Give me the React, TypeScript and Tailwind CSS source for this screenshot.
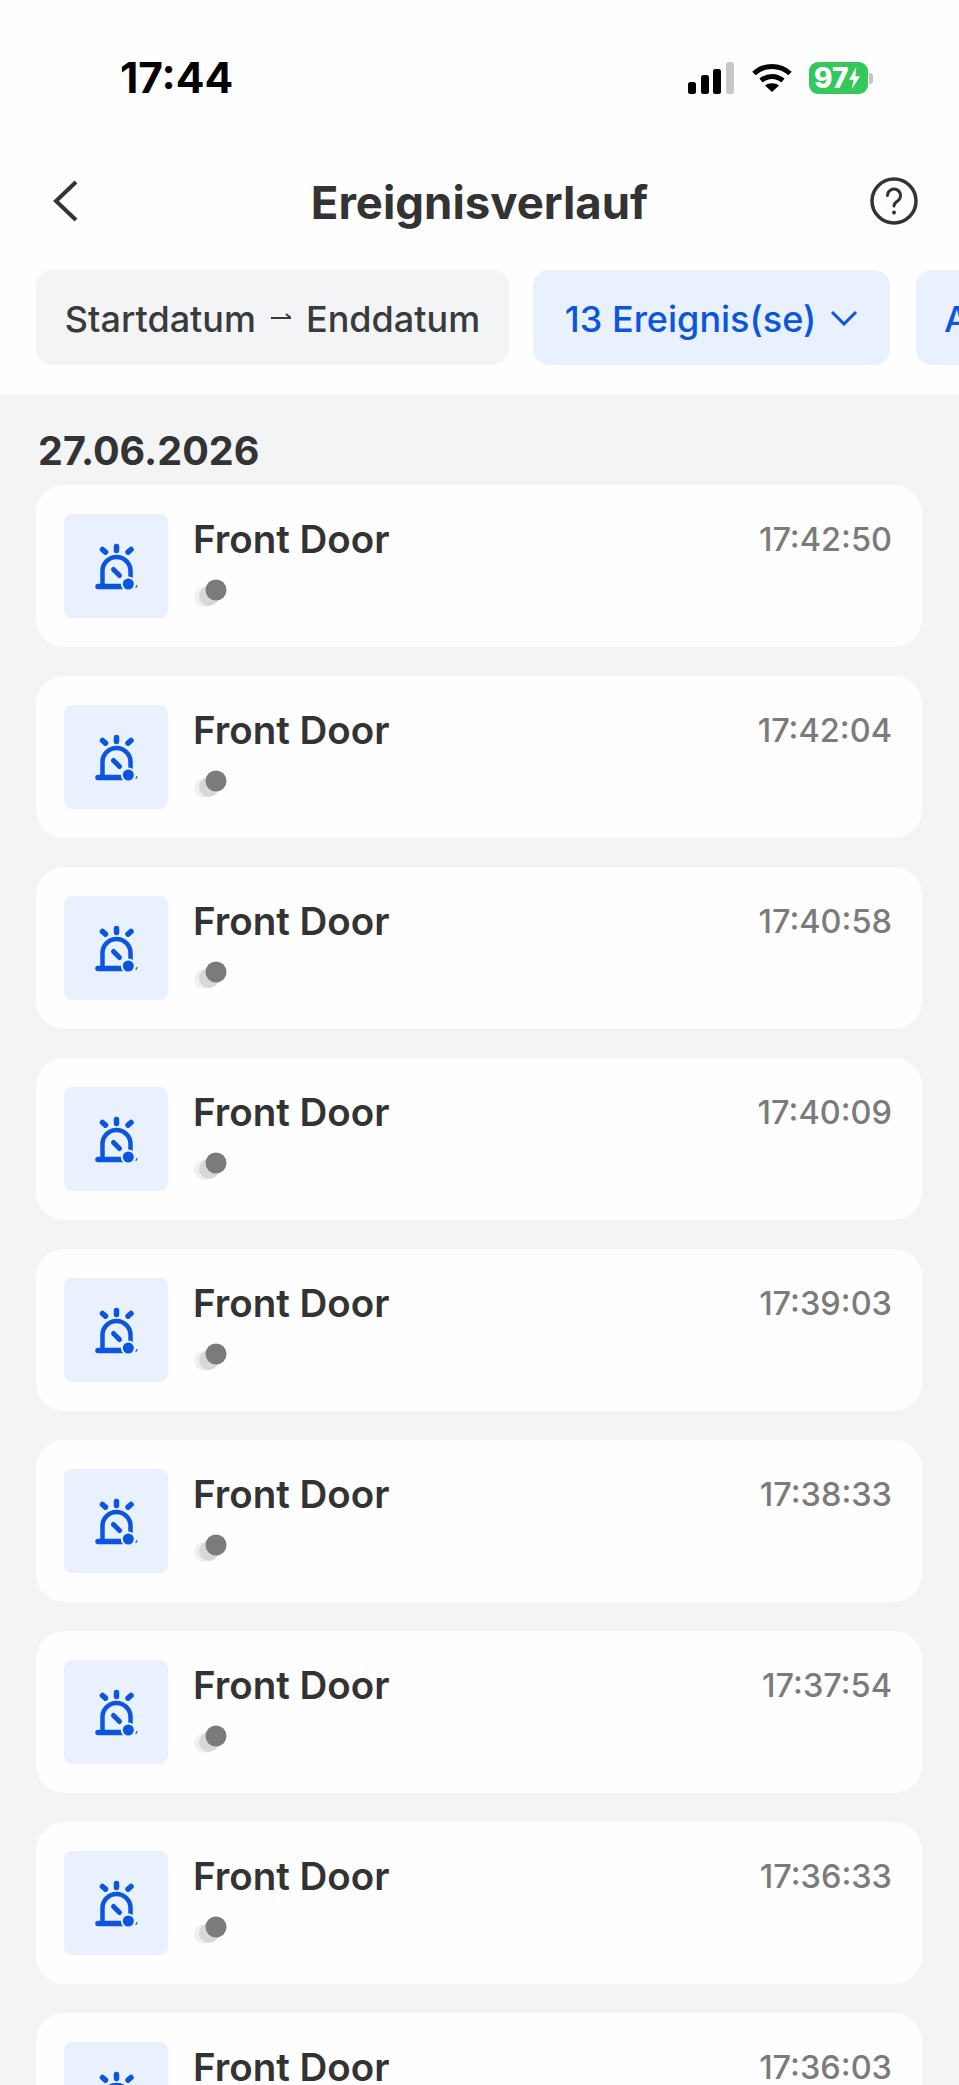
import React from 'react';

const times = ['17:42:50', '17:42:04', '17:40:58', '17:40:09', '17:39:03', '17:38:33', '17:37:54', '17:36:33', '17:36:03'];

const AlarmIcon = () => (
  <svg viewBox="0 0 104 104" className="w-[104px] h-[104px]" fill="none" stroke="#0b55e0" strokeLinecap="round">
    <path d="M52.500 32.500v4M38.500 35.500l3 2.600M67 35.500l-3 2.600" strokeWidth="5.500" />
    <path d="M38.500 72V57a14 14 0 0 1 28 0v9" strokeWidth="4.500" />
    <path d="M34 72.500h27" strokeWidth="5.500" />
    <path d="M49.500 55.500l6 6" strokeWidth="5" />
    <circle cx="64.300" cy="70" r="7.500" fill="#e8f1fd" stroke="none" />
    <circle cx="64.300" cy="70" r="5.500" fill="#0b55e0" stroke="none" />
    <path d="M73 71.500l-1 2" strokeWidth="1.200" />
  </svg>
);

const StatusDot = () => (
  <svg viewBox="0 0 36 34" className="w-[36px] h-[34px]">
    <circle cx="11" cy="20" r="10" fill="#f0f0f0" />
    <circle cx="16" cy="19" r="10" fill="#d8d8d8" />
    <circle cx="23" cy="13" r="10.500" fill="#7b7b7b" />
  </svg>
);

const EventCard = ({ time }: { time: string }) => (
  <div className="h-[162px] rounded-[28px] bg-[#fefefe] pl-[28px] pr-[30px] pt-[29px] flex items-start">
    <div className="w-[104px] h-[104px] rounded-[8px] bg-[#e8f1fd] shrink-0">
      <AlarmIcon />
    </div>
    <div className="ml-[25px] flex-1">
      <div className="flex items-start justify-between pt-[1px]">
        <span className="text-[38.500px] leading-[48px] font-semibold text-[#333333]">Front Door</span>
        <span className="text-[32.500px] leading-[50px] font-medium text-[#7b7b7b]">{time}</span>
      </div>
      <div className="mt-[12px]">
        <StatusDot />
      </div>
    </div>
  </div>
);

export default function App() {
  return (
    <div className="w-[959px] h-[2085px] overflow-hidden bg-[#f3f4f6] font-['Inter',sans-serif]">
      <div className="bg-[#fefefe] pt-[56px] pb-[29px]">
        <div className="h-[44px] flex items-center justify-between pl-[120px] pr-[86px]">
          <span className="text-[42.500px] leading-[44px] font-bold text-black">17:44</span>
          <div className="flex items-center">
            <svg viewBox="0 0 46 32" className="w-[46px] h-[32px]" fill="#000">
              <rect x="0" y="20" width="8" height="12" rx="2.500" />
              <rect x="13" y="13" width="8" height="19" rx="2.500" />
              <rect x="25" y="7" width="8" height="25" rx="2.500" />
              <rect x="38" y="0" width="8" height="32" rx="2.500" fill="#c8c8c8" />
            </svg>
            <svg viewBox="0 0 40 30" className="w-[40px] h-[30px] ml-[18px]" fill="none" stroke="#000" strokeWidth="5">
              <path d="M2 10.500C12 1 28 1 38 10.500" />
              <path d="M9 17.500c6.500-5.500 15.500-5.500 22 0" />
              <path d="M20 29l-7-6.500c4-3 10-3 14 0z" fill="#000" stroke="none" />
            </svg>
            <div className="ml-[17px] w-[59px] h-[32px] rounded-[9px] bg-[#34c759] flex items-center pl-[5px] text-white">
              <span className="text-[28px] leading-[32px] font-extrabold">97</span>
              <svg viewBox="0 0 14 24" className="w-[13px] h-[24px]" fill="#fff">
                <path d="M9 0L1 14h5l-2 10 9-14H8z" />
              </svg>
            </div>
            <div className="ml-[1px] w-[4px] h-[11px] rounded-r-[3px] bg-[#c4c4c4]" />
          </div>
        </div>
        <div className="mt-[61px] h-[80px] flex items-center justify-between pl-[50px] pr-[41px] relative">
          <svg viewBox="0 0 28 44" className="w-[28px] h-[44px]" fill="none" stroke="#333333" strokeWidth="4">
            <path d="M26 3L6 22l20 19" />
          </svg>
          <h1 className="absolute left-0 right-0 top-[2px] text-center text-[45.500px] leading-[80px] font-bold text-[#333333]">Ereignisverlauf</h1>
          <svg viewBox="0 0 48 48" className="w-[48px] h-[48px]" fill="none" stroke="#333333" strokeWidth="3.500" strokeLinecap="round">
            <circle cx="24" cy="24" r="22" />
            <path d="M17.500 18.500a6.500 6.500 0 1 1 10 5.500c-2.200 1.500-3.500 2.800-3.500 5" strokeWidth="3" />
            <circle cx="24" cy="35.500" r="2" fill="#333333" stroke="none" />
          </svg>
        </div>
        <div className="mt-[29px] flex pl-[36px] gap-[24px] overflow-hidden">
          <div className="shrink-0 w-[473px] h-[95px] pt-[2px] rounded-[16px] bg-[#f3f4f6] flex items-center justify-center text-[36px] font-medium text-[#3a3a3a]">
            <span>Startdatum</span>
            <svg viewBox="0 0 20 12" className="w-[20px] h-[12px] mx-[15px] -mt-[4px]" fill="none" stroke="#3a3a3a" strokeWidth="2">
              <path d="M0 7h20M15 3l5 4" />
            </svg>
            <span>Enddatum</span>
          </div>
          <div className="shrink-0 w-[357px] h-[95px] pt-[2px] rounded-[16px] bg-[#e8f1fd] flex items-center justify-center text-[36px] font-medium text-[#0b55e0]">
            <span>13 Ereignis(se)</span>
            <svg viewBox="0 0 28 16" className="w-[28px] h-[16px] ml-[14px] -mt-[2px]" fill="none" stroke="#0b55e0" strokeWidth="3">
              <path d="M2 2l12 12L26 2" />
            </svg>
          </div>
          <div className="shrink-0 w-[200px] h-[95px] pt-[2px] ml-[2px] rounded-[16px] bg-[#e8f1fd] pl-[28px] flex items-center text-[36px] font-medium text-[#0b55e0]">
            <span>Alle</span>
          </div>
        </div>
      </div>
      <div className="pl-[36px] pr-[37px] pt-[37px]">
        <div className="px-[2px] text-[39.500px] leading-[40px] font-bold text-[#333333] mb-[14px]">27.06.2026</div>
        <div className="flex flex-col gap-[29px]">
          {times.map((t) => (
            <EventCard key={t} time={t} />
          ))}
        </div>
      </div>
    </div>
  );
}
